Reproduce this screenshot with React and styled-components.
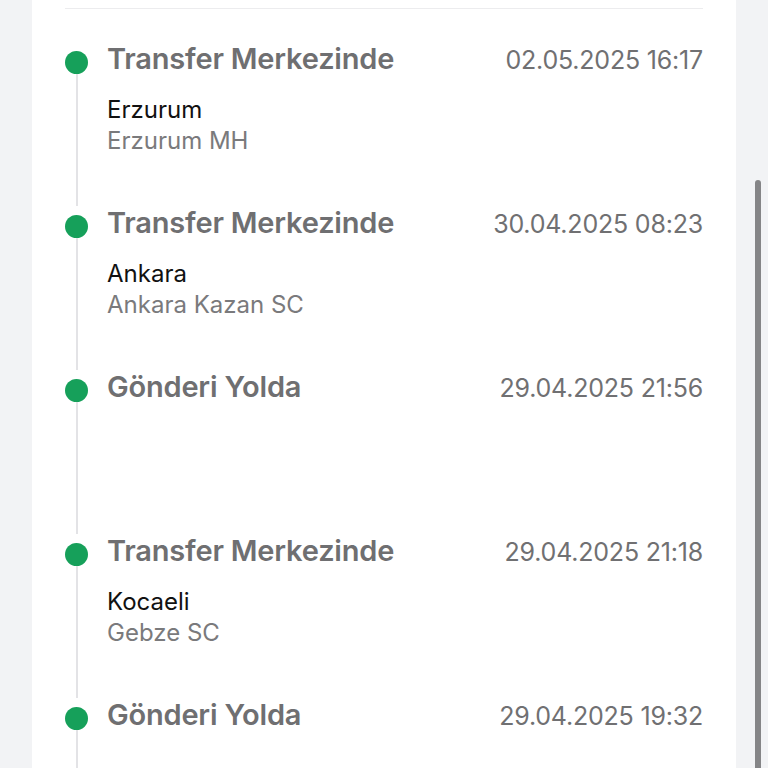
import React from "react";
import styled, { createGlobalStyle } from "styled-components";

const GlobalStyle = createGlobalStyle`
	html, body {
		margin: 0;
		padding: 0;
		background: #f2f3f5;
		font-family: Inter, "Noto Sans", sans-serif;
		overflow: hidden;
	}
`;

const Page = styled.div`
	position: relative;
	height: 768px;
	padding: 0 32px;
`;

const Card = styled.div`
	background: #ffffff;
	width: 704px;
	height: 768px;
	box-sizing: border-box;
	padding: 8px 33px 0 33px;
	overflow: hidden;
`;

const Divider = styled.div`
	height: 1px;
	background: #ececee;
	margin-bottom: 33px;
`;

const Item = styled.div`
	display: grid;
	grid-template-columns: 23px 1fr;
	column-gap: 19px;
	min-height: 164px;
`;

const Rail = styled.div`
	display: flex;
	flex-direction: column;
	align-items: center;
	padding-top: 9px;
`;

const Dot = styled.div`
	width: 23px;
	height: 23px;
	border-radius: 50%;
	background: #16a05a;
	flex-shrink: 0;
`;

const Line = styled.div`
	width: 2px;
	flex: 1;
	background: #e3e3e6;
`;

const Body = styled.div`
	display: flex;
	flex-direction: column;
`;

const Header = styled.div`
	display: flex;
	justify-content: space-between;
	align-items: baseline;
`;

const Title = styled.div`
	font-size: 29px;
	line-height: 34px;
	font-weight: 600;
	color: #6f6f71;
	letter-spacing: -0.2px;
`;

const Date = styled.div`
	font-size: 25px;
	line-height: 34px;
	color: #707072;
	letter-spacing: -0.2px;
`;

const Location = styled.div`
	margin-top: 17px;
	font-size: 24px;
	line-height: 31px;
`;

const City = styled.div`
	color: #111111;
`;

const Center = styled.div`
	color: #7a7a7c;
`;

const Scrollbar = styled.div`
	position: absolute;
	left: 755px;
	top: 180px;
	width: 6px;
	height: 600px;
	border-radius: 3px;
	background: #858587;
`;

const events = [
	{ title: "Transfer Merkezinde", date: "02.05.2025 16:17", city: "Erzurum", center: "Erzurum MH" },
	{ title: "Transfer Merkezinde", date: "30.04.2025 08:23", city: "Ankara", center: "Ankara Kazan SC" },
	{ title: "Gönderi Yolda", date: "29.04.2025 21:56" },
	{ title: "Transfer Merkezinde", date: "29.04.2025 21:18", city: "Kocaeli", center: "Gebze SC" },
	{ title: "Gönderi Yolda", date: "29.04.2025 19:32" },
];

const App = () => {
	return (
		<>
			<GlobalStyle />
			<Page>
				<Card>
					<Divider />
					{events.map((e, i) => (
						<Item key={i}>
							<Rail>
								<Dot />
								<Line />
							</Rail>
							<Body>
								<Header>
									<Title>{e.title}</Title>
									<Date>{e.date}</Date>
								</Header>
								{e.city && (
									<Location>
										<City>{e.city}</City>
										<Center>{e.center}</Center>
									</Location>
								)}
							</Body>
						</Item>
					))}
				</Card>
				<Scrollbar />
			</Page>
		</>
	);
};

export default App;
